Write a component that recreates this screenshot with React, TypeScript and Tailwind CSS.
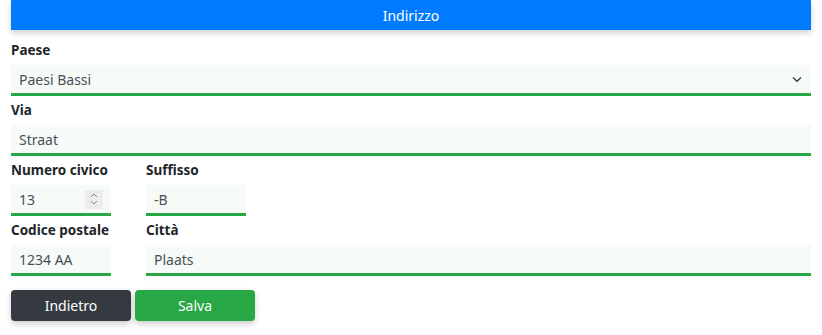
import React from 'react';

const font = { fontFamily: '"Noto Sans", "Open Sans", sans-serif' };

const inputBox =
  'h-[31px] bg-[#f6fbf7] border-b-[3px] border-[#28a745] text-[14px] text-[#495057] px-2 outline-none';

const Field: React.FC<{ label: string; className?: string; children: React.ReactNode }> = ({
  label,
  className,
  children,
}) => (
  <div className={`mt-1 flex flex-col ${className ?? ''}`}>
    <label className="h-5 leading-5 mb-[5px] text-[13.5px] font-bold text-[#212529]">{label}</label>
    {children}
  </div>
);

const App: React.FC = () => {
  return (
    <div className="w-[822px] h-[335px] bg-white" style={font}>
      <div className="mx-[11px] w-[800px]">
        <div className="h-[30px] bg-[#007bff] text-white text-[14px] flex items-center justify-center shadow-[0_3px_6px_rgba(0,0,0,0.18)]">
          Indirizzo
        </div>

        <div className="pt-[6px]">
          <Field label="Paese">
            <div className={`${inputBox} flex items-center justify-between`}>
              <span>Paesi Bassi</span>
              <svg width="10" height="7" viewBox="0 0 10 7" className="mr-[1px]">
                <path d="M1 1.5 L5 5.2 L9 1.5" fill="none" stroke="#343a40" strokeWidth="1.4" />
              </svg>
            </div>
          </Field>

          <Field label="Via">
            <input className={`${inputBox} w-full`} defaultValue="Straat" />
          </Field>

          <div className="flex gap-[35px]">
            <Field label="Numero civico" className="w-[100px]">
              <div className={`${inputBox} flex items-center justify-between pr-2`}>
                <span>13</span>
                <div className="w-[18px] h-[19px] bg-[#ececec] flex flex-col items-center justify-center gap-[2px]">
                  <svg width="8" height="5" viewBox="0 0 8 5">
                    <path d="M1 4 L4 1 L7 4" fill="none" stroke="#8a8a8a" strokeWidth="1" />
                  </svg>
                  <svg width="8" height="5" viewBox="0 0 8 5">
                    <path d="M1 1 L4 4 L7 1" fill="none" stroke="#8a8a8a" strokeWidth="1" />
                  </svg>
                </div>
              </div>
            </Field>
            <Field label="Suffisso" className="w-[100px]">
              <input className={`${inputBox} w-full`} defaultValue="-B" />
            </Field>
          </div>

          <div className="flex gap-[35px]">
            <Field label="Codice postale" className="w-[100px]">
              <input className={`${inputBox} w-full`} defaultValue="1234 AA" />
            </Field>
            <Field label="Città" className="flex-1">
              <input className={`${inputBox} w-full`} defaultValue="Plaats" />
            </Field>
          </div>

          <div className="flex gap-1 mt-[14px]">
            <button className="w-[120px] h-[31px] rounded bg-[#343a40] text-white text-[14px] shadow-[0_3px_6px_rgba(0,0,0,0.2)]">
              Indietro
            </button>
            <button className="w-[120px] h-[31px] rounded bg-[#28a745] text-white text-[14px] shadow-[0_3px_6px_rgba(0,0,0,0.2)]">
              Salva
            </button>
          </div>
        </div>
      </div>
    </div>
  );
};

export default App;
